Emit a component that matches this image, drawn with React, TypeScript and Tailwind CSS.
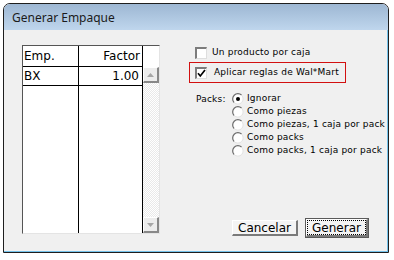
import React from "react";

const packOptions = [
  "Ignorar",
  "Como piezas",
  "Como piezas, 1 caja por pack",
  "Como packs",
  "Como packs, 1 caja por pack",
];

const Checkbox = ({ checked }: { checked?: boolean }) => (
  <div className="flex h-[12px] w-[12px] shrink-0 items-center justify-center border-l-2 border-t-2 border-l-[#7c7c7c] border-t-[#7c7c7c] border-r border-b border-r-[#dedede] border-b-[#dedede] bg-white">
    {checked && (
      <svg width="9" height="9" viewBox="0 0 9 9">
        <path d="M1 4.2 L3.3 7 L8 1" fill="none" stroke="#000" strokeWidth="1.7" />
      </svg>
    )}
  </div>
);

const Radio = ({ selected }: { selected?: boolean }) => (
  <svg width="12" height="12" viewBox="0 0 12 12" className="shrink-0">
    <circle cx="6" cy="6" r="5" fill="#fff" />
    <path d="M2.2 9.6 A5 5 0 0 1 9.6 2.2" fill="none" stroke="#6c6c6c" strokeWidth="1.2" />
    <path d="M9.6 2.2 A5 5 0 0 1 2.2 9.6" fill="none" stroke="#e2e2e2" strokeWidth="1" />
    {selected && <circle cx="6" cy="6" r="2" fill="#000" />}
  </svg>
);

const ScrollButton = ({ up }: { up?: boolean }) => (
  <div className="flex h-[16px] w-full shrink-0 items-center justify-center border-l border-t border-l-white border-t-white border-r-2 border-b-2 border-r-[#888] border-b-[#888] bg-[#ececec]">
    <svg width="7" height="4" viewBox="0 0 7 4">
      <path d={up ? "M0 4 L3.5 0 L7 4 Z" : "M0 0 L3.5 4 L7 0 Z"} fill="#a6a6a6" />
    </svg>
  </div>
);

export default function App() {
  return (
    <div className="min-h-screen bg-white pl-[3px] pt-[3px]">
      <div className="flex h-[250px] w-[386px] flex-col overflow-hidden rounded-t-[7px] border border-[#1e1e1e]">
        {/* title bar */}
        <div className="flex h-[26px] shrink-0 items-center bg-gradient-to-b from-[#9db7d3] to-[#bfd6ed] pl-[8px] pt-[2px] font-['Noto_Sans',sans-serif] text-[12px] text-[#1b1b1b]">
          Generar Empaque
        </div>

        {/* body */}
        <div className="flex flex-1 border-r border-b border-[#74c2ea] bg-[#f0f0f0] font-['DejaVu_Sans',sans-serif] text-black">
          {/* table */}
          <div className="ml-[18px] mt-[15px] flex h-[189px] w-[138px] shrink-0 border-l border-t border-l-[#555] border-t-[#555] border-r border-b border-r-[#e4e4e4] border-b-[#e4e4e4] bg-white text-[12px]">
            <div className="flex w-[56px] flex-col border-r border-black">
              <div className="flex h-[21px] items-center border-b border-black pl-[1px]">Emp.</div>
              <div className="flex h-[19px] items-center border-b border-black pl-[1px]">BX</div>
            </div>
            <div className="flex w-[64px] flex-col border-r border-black">
              <div className="flex h-[21px] items-center justify-end border-b border-black pr-[2px]">Factor</div>
              <div className="flex h-[19px] items-center justify-end border-b border-black pr-[3px]">1.00</div>
            </div>
            <div className="flex w-[16px] flex-col">
              <div className="h-[21px] shrink-0 bg-white" />
              <ScrollButton up />
              <div className="flex-1 bg-[repeating-conic-gradient(#e9e9e9_0_25%,#ffffff_0_50%)] bg-[length:2px_2px]" />
              <ScrollButton />
            </div>
          </div>

          {/* options */}
          <div className="ml-[29px] flex flex-1 flex-col text-[9px] tracking-[0.2px]">
            <div className="mt-[17px] flex h-[12px] items-center gap-[5px] pl-[6px]">
              <Checkbox />
              <span>Un producto por caja</span>
            </div>
            <div className="mt-[3px] flex h-[21px] w-[157px] items-center gap-[7px] border border-[#d21010] pl-[5px]">
              <Checkbox checked />
              <span>Aplicar reglas de Wal*Mart</span>
            </div>

            <div className="mt-[9px] flex pl-[7px]">
              <div className="w-[36px] pt-[1px] leading-[13px]">Packs:</div>
              <div className="flex flex-col">
                {packOptions.map((label, i) => (
                  <div key={label} className="flex h-[13px] items-center gap-[3px]">
                    <Radio selected={i === 0} />
                    <span>{label}</span>
                  </div>
                ))}
              </div>
            </div>

            {/* buttons */}
            <div className="mt-auto flex items-center justify-end gap-[7px] pb-[13px] pr-[18px] text-[12px] tracking-normal">
              <button className="flex h-[16px] w-[66px] items-center justify-center border-l border-t border-l-white border-t-white border-r-2 border-b-2 border-r-[#7a7a7a] border-b-[#7a7a7a] bg-[#f4f4f4] leading-none">
                Cancelar
              </button>
              <button className="flex h-[20px] w-[64px] border border-[#5a5a5a] bg-[#f4f4f4] p-0">
                <div className="flex h-full w-full border-l border-t border-l-white border-t-white border-r-2 border-b-2 border-r-[#7a7a7a] border-b-[#7a7a7a]">
                  <div className="flex flex-1 items-center justify-center border border-dotted border-black leading-none">
                    Generar
                  </div>
                </div>
              </button>
            </div>
          </div>
        </div>
      </div>
    </div>
  );
}
